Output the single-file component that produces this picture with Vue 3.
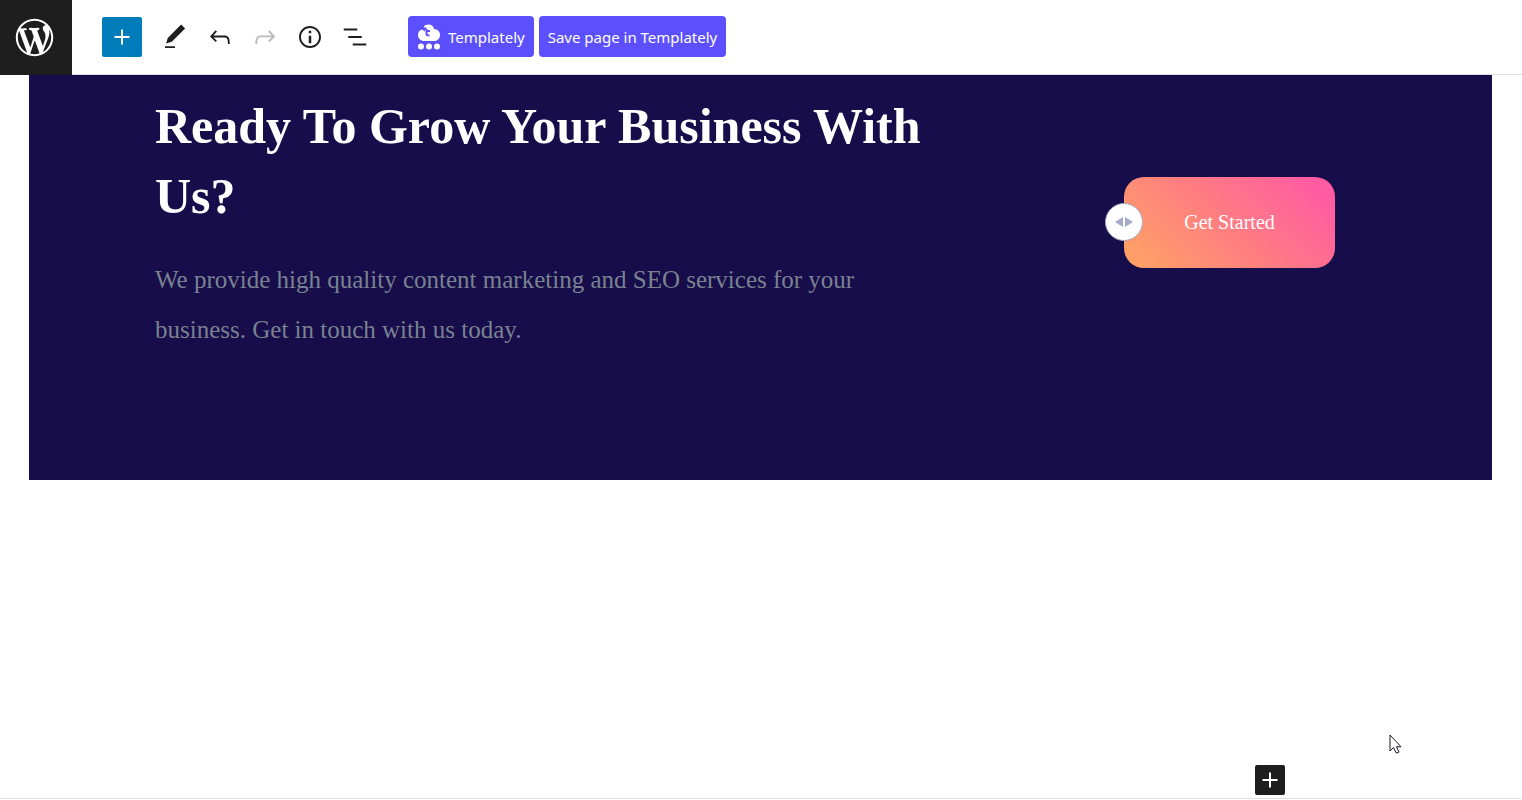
<script setup>
const tools = [
  { name: 'Edit', path: 'M20.1 5.1L16.9 2 6.2 12.7l-1.3 4.4 4.5-1.3L20.1 5.1zM4 20.8h8v-1.5H4v1.5z' },
  { name: 'Undo', path: 'M18.3 11.7c-.6-.6-1.4-.9-2.3-.9H6.7l2.9-3.3-1.1-1-4.5 5L8.5 16l1-1-2.7-2.7H16c.5 0 .9.2 1.3.5 1 1 1 3.4 1 4.5v.3h1.5v-.2c0-1.5 0-4.3-1.5-5.7z' },
  { name: 'Redo', disabled: true, path: 'M15.6 6.5l-1.1 1 2.9 3.3H8c-.9 0-1.7.3-2.3.9-1.4 1.5-1.4 4.2-1.4 5.6v.2h1.5v-.3c0-1.1 0-3.5 1-4.5.3-.3.7-.5 1.3-.5h9.2L14.5 15l1.1 1.1 4.6-4.6-4.6-5z' },
  { name: 'Details', path: 'M12 3.2c-4.8 0-8.8 3.9-8.8 8.8 0 4.8 3.9 8.8 8.8 8.8 4.8 0 8.8-3.9 8.8-8.8 0-4.8-4-8.8-8.8-8.8zm0 16c-4 0-7.2-3.3-7.2-7.2C4.8 8 8 4.8 12 4.8s7.2 3.3 7.2 7.2c0 4-3.2 7.2-7.2 7.2zM11 17h2v-6h-2v6zm0-8h2V7h-2v2z' },
  { name: 'List view', path: 'M13.8 5.2H3v1.5h10.8V5.2zm-3.6 12v1.5H21v-1.5H10.2zm7.2-6H6.6v1.5h10.8v-1.5z' },
]
const plus = 'M18 11.2h-5.2V6h-1.6v5.2H6v1.6h5.2V18h1.6v-5.2H18z'
</script>

<template>
  <div class="editor">
    <header class="topbar">
      <a class="home" href="#" aria-label="View pages">
        <svg viewBox="-2 -2 24 24" aria-hidden="true">
          <path d="M20 10c0-5.51-4.49-10-10-10C4.48 0 0 4.49 0 10c0 5.52 4.48 10 10 10 5.51 0 10-4.48 10-10zM7.78 15.37L4.37 6.22c.55-.02 1.17-.08 1.17-.08.5-.06.44-1.13-.06-1.11 0 0-1.45.11-2.37.11-.18 0-.37 0-.58-.01C4.12 2.69 6.87 1.11 10 1.11c2.33 0 4.45.87 6.05 2.34-.68-.11-1.65.39-1.65 1.58 0 .74.45 1.36.9 2.1.35.61.55 1.36.55 2.46 0 1.49-1.4 5-1.4 5l-3.03-8.37c.54-.02.82-.17.82-.17.5-.05.44-1.25-.06-1.22 0 0-1.44.12-2.38.12-.87 0-2.33-.12-2.33-.12-.5-.03-.56 1.2-.06 1.22l.92.08 1.26 3.41zM17.41 10c.24-.64.74-1.87.43-4.25.7 1.29 1.05 2.71 1.05 4.25 0 3.29-1.73 6.24-4.4 7.78.97-2.59 1.94-5.2 2.92-7.78zM6.1 18.09C3.12 16.65 1.11 13.53 1.11 10c0-1.3.23-2.48.72-3.59C3.25 10.3 4.67 14.2 6.1 18.09zm4.03-6.63l2.58 6.98c-.86.29-1.76.45-2.71.45-.79 0-1.57-.11-2.29-.33.81-2.38 1.62-4.74 2.42-7.1z" />
        </svg>
      </a>
      <button class="add" type="button" aria-label="Add block">
        <svg viewBox="0 0 24 24" aria-hidden="true"><path :d="plus" /></svg>
      </button>
      <div class="tools">
        <button v-for="t in tools" :key="t.name" class="tool" type="button" :aria-label="t.name" :disabled="t.disabled">
          <svg viewBox="0 0 24 24" aria-hidden="true"><path :d="t.path" /></svg>
        </button>
      </div>
      <div class="actions">
        <button class="brand" type="button">
          <svg viewBox="0 0 24 26" aria-hidden="true">
            <path fill="#fff" d="M7.500 17C3.500 17 1 14.500 1 11c0-3 1.700-5 4-5.500L8 7.500V4.500L6.800 3C7.500 1.200 9.500.5 11.500.5c3 0 5 1.500 5.500 4.500 3.500.2 6 2.500 6 6 0 3.500-2.500 6-6 6z" />
            <path d="M9.500 5v5q0 1.500 3 1.500M7 4.500h2.500M9.500 7h3.500" fill="none" stroke="#5c50fe" stroke-width="2" />
            <circle cx="4" cy="22.500" r="3" fill="#fff" />
            <circle cx="12" cy="22.500" r="3" fill="#fff" />
            <circle cx="20" cy="22.500" r="3" fill="#fff" />
          </svg>
          <span>Templately</span>
        </button>
        <button class="brand" type="button">Save page in Templately</button>
      </div>
    </header>

    <main class="canvas">
      <section class="hero">
        <div class="copy">
          <h1>Ready To Grow Your Business With Us?</h1>
          <p>We provide high quality content marketing and SEO services for your business. Get in touch with us today.</p>
        </div>
        <div class="cta">
          <button class="start" type="button">Get Started</button>
          <button class="handle" type="button" aria-label="Resize column">
            <svg viewBox="0 0 18 10" aria-hidden="true"><path d="M8 0v10L0 5zM10 0v10l8-5z" /></svg>
          </button>
        </div>
      </section>
      <button class="inserter" type="button" aria-label="Add block">
        <svg viewBox="0 0 24 24" aria-hidden="true"><path :d="plus" /></svg>
      </button>
    </main>

    <svg class="cursor" viewBox="0 0 13 20" aria-hidden="true">
      <path d="M1 1v16l3.500-3.500 2.500 5.300h2.300l.5-1-2.300-5h4.500z" fill="#fff" stroke="#1b1722" stroke-width="1" />
    </svg>
  </div>
</template>

<style>
body {
  margin: 0;
  background: #fff;
}
</style>

<style scoped>
.editor {
  position: relative;
  display: flex;
  flex-direction: column;
  box-sizing: border-box;
  min-height: 100vh;
  padding-bottom: 1px;
  font-family: "Noto Sans", "Open Sans", sans-serif;
}
button {
  display: flex;
  align-items: center;
  justify-content: center;
  margin: 0;
  padding: 0;
  border: 0;
  background: none;
  font: inherit;
}
svg {
  display: block;
  fill: currentColor;
}
.topbar {
  display: flex;
  align-items: center;
  box-sizing: border-box;
  height: 75px;
  border-bottom: 1px solid #e0e0e0;
}
.home {
  display: flex;
  align-items: center;
  justify-content: center;
  box-sizing: border-box;
  width: 72px;
  height: 75px;
  margin-bottom: -1px;
  padding-right: 3px;
  background: #1e1e1e;
  color: #fff;
}
.home svg {
  width: 45px;
  height: 45px;
}
.add {
  width: 40px;
  height: 40px;
  margin-left: 30px;
  border-radius: 2px;
  background: #007cba;
  color: #fff;
}
.add svg,
.tool svg {
  width: 30px;
  height: 30px;
}
.tools {
  display: flex;
  gap: 5px;
  margin-left: 13px;
}
.tool {
  width: 40px;
  height: 40px;
  color: #1e1e1e;
}
.tool:disabled {
  color: #bbb;
}
.actions {
  display: flex;
  gap: 5px;
  margin-left: 33px;
  padding-bottom: 1px;
}
.brand {
  gap: 7px;
  height: 41px;
  padding: 0 9px;
  border-radius: 4px;
  background: #5c50fe;
  color: #fff;
  font-size: 15px;
  line-height: 24px;
  white-space: nowrap;
}
.brand svg {
  width: 24px;
  height: 26px;
}
.canvas {
  display: flex;
  flex: 1;
  flex-direction: column;
  justify-content: space-between;
  padding: 0 30px 3px 29px;
  border-bottom: 1px solid #e0e0e0;
}
.hero {
  display: flex;
  align-items: flex-start;
  justify-content: space-between;
  box-sizing: border-box;
  min-height: 405px;
  padding: 16px 157px 0 126px;
  background: #160d4a;
  font-family: "Liberation Serif", serif;
}
.copy {
  flex: 0 1 780px;
}
h1 {
  margin: 0;
  color: #fff;
  font-size: 50px;
  font-weight: 700;
  line-height: 70px;
}
p {
  margin: 24px 0 0;
  color: #7a8291;
  font-size: 25px;
  line-height: 50px;
}
.cta {
  position: relative;
  margin-top: 86px;
}
.start {
  width: 211px;
  height: 91px;
  border-radius: 20px;
  background: linear-gradient(45deg, #ffa564 0%, #ff7c82 50%, #ff5ca2 90%);
  color: #fff;
  font-size: 20px;
}
.handle {
  position: absolute;
  top: 26px;
  left: -19px;
  box-sizing: border-box;
  width: 38px;
  height: 38px;
  border: 1px solid #a4aac8;
  border-radius: 50%;
  background: #fff;
  color: #a4aac8;
}
.handle svg {
  width: 18px;
  height: 10px;
}
.inserter {
  align-self: flex-end;
  width: 30px;
  height: 30px;
  margin-right: 207px;
  border-radius: 2px;
  background: #1e1e1e;
  color: #fff;
}
.inserter svg {
  width: 30px;
  height: 30px;
}
.cursor {
  position: absolute;
  right: 120px;
  bottom: 46px;
  width: 13px;
  height: 20px;
}
</style>
